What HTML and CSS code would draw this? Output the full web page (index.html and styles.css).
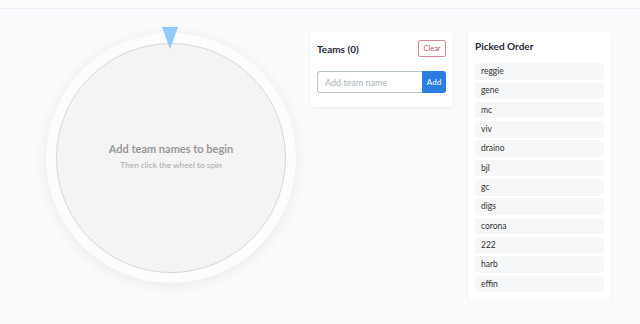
FILE: index.html
```html
<!DOCTYPE html>
<html lang="en">
<head>
<meta charset="utf-8">
<title>Team Wheel</title>
<link rel="stylesheet" href="styles.css">
</head>
<body>
<header class="topbar"></header>
<main class="layout">
  <section class="wheel-wrap">
    <div class="pointer"></div>
    <div class="wheel-outer">
      <div class="wheel-inner">
        <div class="wheel-title">Add team names to begin</div>
        <div class="wheel-sub">Then click the wheel to spin</div>
      </div>
    </div>
  </section>
  <section class="card teams">
    <div class="card-head">
      <h2 class="card-title">Teams (0)</h2>
      <button class="btn-clear">Clear</button>
    </div>
    <div class="add-row">
      <input class="add-input" type="text" placeholder="Add team name">
      <button class="btn-add">Add</button>
    </div>
  </section>
  <section class="card picked">
    <h2 class="card-title picked-title">Picked Order</h2>
    <ul class="pick-list">
      <li class="pick">reggie</li>
      <li class="pick">gene</li>
      <li class="pick">mc</li>
      <li class="pick">viv</li>
      <li class="pick">draino</li>
      <li class="pick">bjl</li>
      <li class="pick">gc</li>
      <li class="pick">digs</li>
      <li class="pick">corona</li>
      <li class="pick">222</li>
      <li class="pick">harb</li>
      <li class="pick">effin</li>
    </ul>
  </section>
</main>
</body>
</html>
```
FILE: styles.css
```css
* { box-sizing: border-box; }
html, body {
  margin: 0;
  padding: 0;
  background: #f8fafc;
  font-family: Lato, "Open Sans", sans-serif;
  color: #1f2937;
}
.topbar {
  height: 9px;
  background: #fafbfd;
  border-bottom: 1px solid #eceff4;
}
.layout {
  display: flex;
  align-items: flex-start;
  gap: 14px;
  padding: 23px 0 0 46px;
}
.wheel-wrap {
  position: relative;
  width: 250px;
  height: 250px;
  margin-top: 1px;
  flex: none;
}
.pointer {
  position: absolute;
  top: -6px;
  left: 116px;
  width: 0;
  height: 0;
  border-left: 8.5px solid transparent;
  border-right: 8.5px solid transparent;
  border-top: 22px solid #90caf9;
  z-index: 2;
}
.wheel-outer {
  width: 250px;
  height: 250px;
  border-radius: 50%;
  background: #fbfcfd;
  box-shadow: 0 2px 14px rgba(0, 0, 0, 0.07);
  padding: 10px;
  display: flex;
}
.wheel-inner {
  flex: 1;
  border-radius: 50%;
  background: #f4f4f4;
  border: 1px solid #d8d8d8;
  display: flex;
  flex-direction: column;
  align-items: center;
  justify-content: center;
}
.wheel-title {
  font-size: 11px;
  font-weight: 700;
  color: #9a9a9a;
  margin-top: -5px;
}
.wheel-sub {
  font-size: 8.3px;
  color: #aaa;
  margin-top: 5px;
}
.card {
  background: #fff;
  border-radius: 4px;
  box-shadow: 0 1px 4px rgba(0, 0, 0, 0.05);
  width: 143px;
  flex: none;
}
.teams {
  padding: 8px 7px 14px 7px;
}
.card-head {
  display: flex;
  justify-content: space-between;
  align-items: center;
  height: 17px;
}
.card-title {
  margin: 0;
  font-size: 10px;
  font-weight: 700;
  color: #1f2937;
}
.btn-clear {
  height: 17px;
  width: 28px;
  padding: 0;
  border: 1px solid #d88a96;
  border-radius: 2px;
  background: #fff;
  color: #c94f60;
  font-family: inherit;
  font-size: 7.5px;
}
.add-row {
  display: flex;
  margin-top: 14px;
  height: 22px;
}
.add-input {
  width: 105px;
  height: 22px;
  border: 1px solid #b9c3cd;
  border-right: none;
  border-radius: 3px 0 0 3px;
  padding: 0 7px;
  font-family: inherit;
  font-size: 9px;
  color: #333;
  outline: none;
}
.add-input::placeholder { color: #a9b1ba; }
.btn-add {
  flex: 1;
  height: 22px;
  border: none;
  border-radius: 0 3px 3px 0;
  background: #2b7de0;
  color: #fff;
  font-family: inherit;
  font-size: 8px;
  padding: 0;
}
.picked {
  margin-top: -1px;
  margin-left: 1px;
  padding: 8px 7px 7px 7px;
}
.picked-title {
  font-size: 10px;
  line-height: 15px;
  margin-bottom: 9px;
}
.pick-list {
  list-style: none;
  margin: 0;
  padding: 0;
  display: flex;
  flex-direction: column;
  gap: 2.85px;
}
.pick {
  height: 16.5px;
  line-height: 16.5px;
  background: #f6f7f9;
  border-radius: 3px;
  padding: 0 6px;
  font-size: 8.5px;
  color: #333;
}
```
